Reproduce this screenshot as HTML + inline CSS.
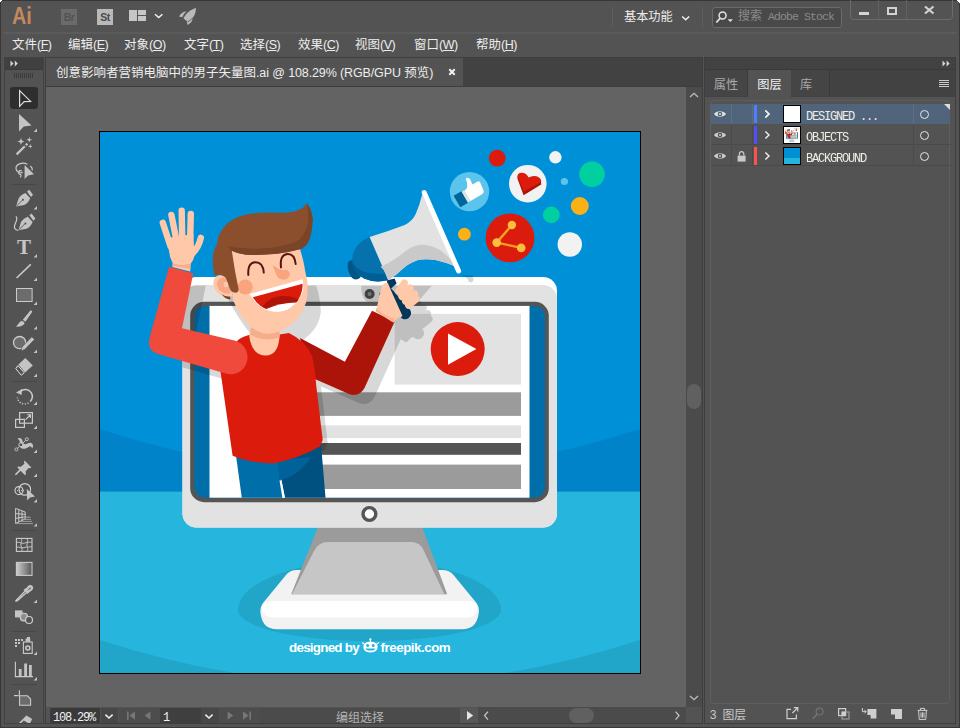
<!DOCTYPE html>
<html lang="zh-CN">
<head>
<meta charset="utf-8">
<title>Adobe Illustrator</title>
<style>
*{box-sizing:border-box;margin:0;padding:0}
html,body{width:960px;height:728px;overflow:hidden;background:#535353}
body{position:relative;font-family:"Liberation Sans","Noto Sans CJK SC",sans-serif;font-size:12px;color:#e6e6e6}
.a{position:absolute}
svg{position:absolute;overflow:visible}
#win{position:absolute;left:0;top:0;width:960px;height:728px;background:#535353;border:1px solid #383838;border-top-color:#363636}
#appline{position:absolute;left:4px;top:32px;width:952px;height:2px;background:#5b5b5b}
.mi{position:absolute;top:37px;font-size:12.5px;line-height:17px;color:#ededed;white-space:nowrap}
.mi u{text-decoration:underline;text-underline-offset:0.5px;text-decoration-thickness:1px}
.mono{font-family:"Liberation Mono","Noto Sans CJK SC",monospace}
/* toolbar */
#tb{position:absolute;left:4px;top:57px;width:40px;height:667px;background:#535353;border:1px solid #424242}
#tbhead{position:absolute;left:5px;top:58px;width:38px;height:12px;background:#404040;border-bottom:1px solid #3a3a3a}
.sep{position:absolute;left:11px;width:26px;height:1px;background:#474747}
/* doc */
#doc{position:absolute;left:45px;top:57px;width:658px;height:667px;background:#535353;border:1px solid #3e3e3e}
#tabbar{position:absolute;left:46px;top:58px;width:656px;height:28px;background:#424242}
#tab{position:absolute;left:46px;top:58px;width:417px;height:28px;background:#535353}
#tabline{position:absolute;left:46px;top:86px;width:656px;height:1px;background:#3d3d3d}
#tabtxt{position:absolute;left:56px;top:65px;font-size:12.5px;line-height:17px;color:#ededed;white-space:nowrap}
#canvas{position:absolute;left:46px;top:87px;width:640px;height:620px;background:#636363}
#vscroll{position:absolute;left:686px;top:87px;width:16px;height:620px;background:#4b4b4b}
#vthumb{position:absolute;left:687px;top:384px;width:14px;height:25px;border-radius:7px;background:#606060}
#status{position:absolute;left:46px;top:707px;width:656px;height:16px;background:#4b4b4b}
/* right panel */
#rp{position:absolute;left:704px;top:57px;width:252px;height:667px;background:#535353;border:1px solid #3e3e3e}
#rphead{position:absolute;left:705px;top:58px;width:250px;height:12px;background:#424242;border-bottom:1px solid #3a3a3a}
#rptabs{position:absolute;left:705px;top:70px;width:250px;height:27px;background:#424242}
.ptab{position:absolute;top:70px;height:26px;font-size:12.2px;line-height:18px;padding-top:6px;text-align:center;color:#a9a9a9;background:#454545;border-right:1px solid #3a3a3a}
#frame{position:absolute;left:710px;top:100px;width:240px;height:604px;border:1px solid #5f5f5f;border-radius:4px}
.row{position:absolute;left:711px;width:239px;height:20px;border-bottom:1px solid #4a4a4a}
.cellsep{position:absolute;top:0;width:1px;height:20px;background:#4a4a4a}
.lname{position:absolute;left:95px;top:4.5px;font-family:"Liberation Mono","Noto Sans CJK SC",monospace;font-size:12px;line-height:17px;color:#efece4;white-space:nowrap;letter-spacing:-1.2px}
</style>
</head>
<body>
<div id="win"></div>
<div id="appline"></div>
<div class="a" style="left:0;top:0;width:2px;height:1px;background:#fff"></div><div class="a" style="left:0;top:1px;width:1px;height:1px;background:#fff"></div>
<div class="a" style="left:957px;top:0;width:3px;height:1px;background:#fff"></div><div class="a" style="left:958px;top:1px;width:2px;height:1px;background:#fff"></div><div class="a" style="left:959px;top:2px;width:1px;height:1px;background:#fff"></div>
<!-- app bar -->
<div class="a" style="left:11.5px;top:2px;font-size:23px;line-height:28px;font-weight:700;color:#c4895e;letter-spacing:0;transform:scaleX(.86);transform-origin:0 0">Ai</div>
<div class="a" style="left:61px;top:9px;width:16px;height:16px;background:#6b6b6b;color:#535353;font-size:10.5px;line-height:16px;text-align:center;font-weight:700;letter-spacing:-0.5px">Br</div>
<div class="a" style="left:97px;top:9px;width:16px;height:16px;background:#b9b9b9;color:#4a4a4a;font-size:10.5px;line-height:16px;text-align:center;font-weight:700;letter-spacing:-0.5px">St</div>
<svg style="left:128px;top:8px" width="72" height="20" viewBox="128 8 72 20">
 <rect x="129" y="10" width="8" height="11" fill="#c6c6c6"/>
 <rect x="138" y="10" width="8" height="5" fill="#c6c6c6"/>
 <rect x="138" y="16" width="8" height="5" fill="#c6c6c6"/>
 <path d="M155 14.2 L158.7 17.6 L162.4 14.2" fill="none" stroke="#f0f0f0" stroke-width="1.5"/>
 <path d="M196 8 C190 9.5 185.5 14 183.5 18.5 L188 22 C192.5 19.5 196 14.5 196 8Z M186.5 11.5 C183 11.5 180.5 13.5 179 16.5 L182.3 17.3 C183.2 15 184.6 13 186.5 11.5Z M192.6 17.5 C192.8 21 190.8 23.3 187.6 25 L186.8 21.8 C189 20.8 191 19.3 192.6 17.5Z" fill="#b9b9b9"/>
</svg>
<div class="a" style="left:612px;top:7px;width:1px;height:20px;background:#5f5f5f"></div>
<div class="a" style="left:702px;top:7px;width:1px;height:20px;background:#5f5f5f"></div>
<div class="a" style="left:624px;top:8.5px;font-size:12.2px;line-height:17px;color:#ededed;white-space:nowrap">基本功能</div>
<svg style="left:680px;top:14px" width="12" height="8" viewBox="680 14 12 8"><path d="M682.2 16.5 L685.7 19.8 L689.2 16.5" fill="none" stroke="#f0f0f0" stroke-width="1.5"/></svg>
<div class="a" style="left:712px;top:7px;width:130px;height:21px;border:1px solid #6b6b6b;border-radius:3px;background:#494949"></div>
<svg style="left:715px;top:9px" width="20" height="16" viewBox="715 9 20 16">
 <circle cx="722.6" cy="15.6" r="3.5" fill="none" stroke="#e2e2e2" stroke-width="1.5"/>
 <path d="M720 18.3 L716.3 22.5" stroke="#e2e2e2" stroke-width="1.8" fill="none"/>
 <path d="M727.6 19.2 h5.4 l-2.7 2.8z" fill="#e2e2e2"/>
</svg>
<div class="a mono" style="left:738px;top:9px;font-size:11.5px;line-height:16px;color:#8b8b8b;white-space:nowrap;letter-spacing:-0.9px"><span style="letter-spacing:0;font-size:12px">搜索</span> Adobe Stock</div>
<div class="a" style="left:850px;top:-1px;width:103px;height:21px;border:1px solid #6b6b6b;border-radius:0 0 4px 4px"></div>
<div class="a" style="left:878px;top:0px;width:1px;height:19px;background:#616161"></div>
<div class="a" style="left:906px;top:0px;width:1px;height:19px;background:#616161"></div>
<div class="a" style="left:859px;top:12px;width:10px;height:3px;background:#d2d2d2"></div>
<div class="a" style="left:887px;top:7px;width:10px;height:8px;border:2px solid #d2d2d2"></div>
<svg style="left:923px;top:5px" width="12" height="10" viewBox="923 5 12 10"><path d="M925 6.5 L933.5 13.5 M933.5 6.5 L925 13.5" stroke="#d2d2d2" stroke-width="2.2" fill="none"/></svg>
<!-- menu -->
<div class="mi" style="left:12px">文件<span style="letter-spacing:-0.5px">(<u>F</u>)</span></div>
<div class="mi" style="left:68px">编辑<span style="letter-spacing:-0.5px">(<u>E</u>)</span></div>
<div class="mi" style="left:124px">对象<span style="letter-spacing:-0.5px">(<u>O</u>)</span></div>
<div class="mi" style="left:184px">文字<span style="letter-spacing:-0.5px">(<u>T</u>)</span></div>
<div class="mi" style="left:240px">选择<span style="letter-spacing:-0.5px">(<u>S</u>)</span></div>
<div class="mi" style="left:298px">效果<span style="letter-spacing:-0.5px">(<u>C</u>)</span></div>
<div class="mi" style="left:355px">视图<span style="letter-spacing:-0.5px">(<u>V</u>)</span></div>
<div class="mi" style="left:414px">窗口<span style="letter-spacing:-0.5px">(<u>W</u>)</span></div>
<div class="mi" style="left:476px">帮助<span style="letter-spacing:-0.5px">(<u>H</u>)</span></div>
<!-- toolbar -->
<div id="tb"></div><div id="tbhead"></div>
<svg style="left:0;top:57px" width="46" height="666" viewBox="0 57 46 666">
<defs><linearGradient id="gr" x1="0" x2="1" y1="0" y2="0"><stop offset="0" stop-color="#cfcfcf"/><stop offset="1" stop-color="#565656"/></linearGradient>
<clipPath id="tbclip"><rect x="5" y="58" width="38" height="665"/></clipPath></defs>
<g clip-path="url(#tbclip)">
<path d="M10.5 60.5 L13.5 63.5 L10.5 66.5Z M14.8 60.5 L17.8 63.5 L14.8 66.5Z" fill="#d6d6d6"/>
<path d="M14.5 73v5M16.5 73v5M18.5 73v5M20.5 73v5M22.5 73v5M24.5 73v5M26.5 73v5M28.5 73v5M30.5 73v5M32.5 73v5" stroke="#3b3b3b" stroke-width="1"/>
<rect x="10" y="87" width="28" height="22" rx="3" fill="#2e2e2e"/>
<path d="M19.6 90.6 L19.6 106.3 L24.2 101.6 L30.6 101.4Z" fill="none" stroke="#dedede" stroke-width="1.2" stroke-linejoin="miter"/>
<g fill="#c4c4c4">
<path d="M19 114 L19 131.6 L23.8 126.6 L31.6 125.4Z"/>
<path id="tri" d="M37 128.6 V132 H33.6Z"/>
<!-- wand -->
<path d="M15.8 153.6 L24 145.4 L25.6 147 L17.4 155.2Z M25 144.4 L26.6 142.8 L28.2 144.4 L26.6 146Z"/>
<path d="M21 138 L21.9 140.6 L24.5 141.5 L21.9 142.4 L21 145 L20.1 142.4 L17.5 141.5 L20.1 140.6Z M29.3 136.8 L30 139 L32.2 139.7 L30 140.4 L29.3 142.6 L28.6 140.4 L26.4 139.7 L28.6 139Z M30.3 144 L30.9 145.7 L32.6 146.3 L30.9 146.9 L30.3 148.6 L29.7 146.9 L28 146.3 L29.7 145.7Z"/>
<!-- lasso -->
<path d="M24.6 165 L24.6 179 L28 175.4 L34 174.2Z"/>
<!-- pen -->
<path id="nib" d="M16 206.6 L18.6 198.4 C20 196 22.4 194 25.4 193 L30.2 198.2 C29 201.4 26.6 203.8 24.2 205Z M27 191.6 L29.2 189.8 L33 194.8 L31 197Z"/>
<use href="#tri" y="77.4"/>
<use href="#nib" x="2.4" y="23.7"/>
<use href="#tri" y="125.4"/>
<use href="#tri" y="149"/>
<use href="#tri" y="173"/>
<!-- brush -->
<path d="M30.4 310.6 C31.8 310 32.6 311.2 31.8 312.4 L25.4 321.8 L22.8 319.8Z M22.2 320.8 L24.6 322.8 C24 325.6 20.5 327.2 15.6 326.6 C18.4 325.2 18.8 321.6 22.2 320.8Z"/>
<use href="#tri" y="197.4"/>
<use href="#tri" y="221"/>
<!-- eraser -->
<path d="M25.3 358 L32.8 365.4 L25 372.4 L18.4 364.6Z"/>
<use href="#tri" y="245"/>
<!-- rotate -->
<path d="M16 392.4 L22 389 L21.6 395Z"/>
<use href="#tri" y="273"/>
<use href="#tri" y="297"/>
<!-- warp -->
<path d="M17.5 438.5 C20 437 22.5 438.5 22.6 441.5 C23 444 25 445 27.5 443.6 C30 442 32.6 442.6 33 445.6 C33.2 447 32.6 448 32 448.4 C31.6 446.6 30.4 446 28.6 447 C26 449 22.4 449.6 20.4 447.4 C18.4 445 20.6 442.4 19.6 440.8 C19.2 440 18.4 439.6 17.5 438.5Z"/>
<use href="#tri" y="321"/>
<!-- pin -->
<path d="M24.6 460.6 L31.4 467.4 L29.8 468.2 L28.6 468 L25.6 471.6 L26 474.4 L24.8 475 L17.4 467.6 L18 466.4 L20.8 466.8 L24.4 463.8 L24 462.4Z"/>
<use href="#tri" y="345"/>
<!-- shape builder arrow -->
<path d="M26.8 489 L27.2 500.4 L30 497.6 L35 496.6Z"/>
<use href="#tri" y="370.4"/>
<!-- perspective -->
<path d="M26.5 516.5 L30 516.5 L31 518 L25.5 518Z" fill="#8a8a8a"/>
<use href="#tri" y="394.6"/>
<use href="#tri" y="471"/>
<!-- blend -->
<rect x="15" y="610.4" width="7.6" height="7"/>
<!-- sprayer dots -->
<path d="M15 639h2v2h-2z M18 639h2v2h-2z M21 639h2v2h-2z M15 642h2v2h-2z M18 642h2v2h-2z M15 645h2v2h-2z M25.6 638.4h4.6v3.4h-4.6z M27 637h3v1.6h-3z"/>
<use href="#tri" y="523"/>
<!-- graph bars -->
<path d="M18.8 669 h2.8 v7.4 h-2.8z M24.2 663.4 h2.8 v13 h-2.8z M29 665 h2.8 v11.4 h-2.8z"/>
<use href="#tri" y="548.4"/>
<!-- slice -->
<path d="M26.4 715.4 L32.2 719 L29.6 724 L23.8 720.4 L19.6 724.6 L18.4 723.6Z"/>
</g>
<g fill="none" stroke="#cbcbcb" stroke-width="1.2">
<!-- lasso loop -->
<path d="M27.4 164.2 C22 161.6 15.6 164.6 16 168.6 C16.3 172 20 173.6 22.6 172.4 M30.4 166 C32 167.4 32.6 169 32.2 170.4 M21.8 171 A2 2 0 1 0 20.6 174.6 C21.4 175.6 21 176.6 20 177.2"/>
<!-- pen slits -->
<path d="M16.6 206 L22.4 200.2" stroke="#535353" stroke-width="0.9"/>
<path d="M19 229.7 L24.8 223.9" stroke="#535353" stroke-width="0.9"/>
<!-- curvature squiggle -->
<path d="M15.8 216.6 C19 219 14.6 223 14.4 226.6 C14.4 229.4 16.6 230.4 18.4 230.2"/>
<!-- line -->
<path d="M16.6 278 L30.8 264.4" stroke-width="1.5"/>
<!-- rect -->
<rect x="16.5" y="288.5" width="15.6" height="13" fill="#6c6c6c" stroke-width="1"/>
<!-- shaper -->
<circle cx="19.6" cy="342.6" r="6.1" fill="#6c6c6c" stroke-width="1.3"/>
<!-- eraser outline -->
<path d="M18 365.6 L24.2 372.8 L21.2 375.2 L15.8 368.6Z" stroke="#e0e0e0" stroke-width="1"/>
<!-- rotate -->
<path d="M20.4 391.4 C23.6 388.6 28.6 389 31 392.4 C33 395.4 32.4 399 30.2 401.4" stroke-width="1.5"/>
<path d="M28.6 402.8 C25.6 404.8 21.4 404.2 19 401.4 C18 400.2 17.4 398.8 17.4 397.4" stroke-width="1.4" stroke-dasharray="1.2 1.6"/>
<!-- scale -->
<rect x="19.6" y="412.6" width="12.8" height="10.6"/>
<rect x="15.6" y="419.4" width="8.8" height="8" />
<path d="M25.6 419.6 L30.2 415 M27.2 414.8 H30.4 V418" stroke-width="1.1"/>
<!-- warp handles -->
<path d="M16.6 449.2 L26.6 439.4" stroke-width="0.9"/>
<circle cx="16.4" cy="449.4" r="1.5" fill="#535353" stroke-width="0.9"/>
<circle cx="26.8" cy="439.2" r="1.5" fill="#535353" stroke-width="0.9"/>
<circle cx="20.8" cy="444.8" r="2" fill="#535353" stroke-width="1"/>
<!-- pin needle -->
<path d="M15.4 474.8 L20.6 469.6" stroke-width="1.6"/>
<!-- shape builder -->
<circle cx="24.8" cy="489.4" r="5.8"/>
<circle cx="19" cy="490.6" r="4"/>
<path d="M17 490.6 H25" stroke-dasharray="1 1" stroke-width="1"/>
<!-- perspective grid -->
<path d="M15.6 508.4 L25.2 512 V519 L15.6 523.4Z M18.8 509.6 V522 M22 510.8 V520.4 M15.6 513.6 L25.2 514.4 M15.6 518.4 L25.2 516.8" stroke-width="1"/>
<path d="M15.6 523.6 H33 M20 521.4 H32 M24 519.4 H31" stroke-width="0.9" stroke="#a5a5a5"/>
<!-- mesh -->
<rect x="16.4" y="538.4" width="15.6" height="13" stroke-width="1.1"/>
<path d="M16.4 542.6 C20 541 22 544.6 25 543 C28 541.4 30 542.6 32 542 M16.4 547.4 C19 546 21 549 24 547.6 C27 546.4 29.4 547.6 32 546.6 M21 538.4 C23 541 19.4 544.6 21.6 547 C22.6 548.6 22 550 21.6 551.4 M27 538.4 C29 541.4 25.6 544.6 27.4 547.4 C28.2 549 27.6 550.4 27.4 551.4" stroke-width="0.9"/>
<!-- gradient -->
<rect x="16.4" y="562.4" width="15.6" height="13" fill="url(#gr)" stroke-width="1.1"/>
<!-- eyedropper -->
<path d="M25.2 591 L18 598.4 C17 599.6 16 599.8 15.8 601 C17 601.2 17.6 600.4 18.8 599.4 L26.6 592.4" stroke-width="1.3"/>
<path d="M24.4 589.2 L28.4 593.2 M25.6 590.4 L28 588 C29 586 31.2 585.6 31.8 587 C32.6 588.4 31 590 29.6 590.6 L27.2 592.4" stroke-width="2.4" stroke="#c4c4c4"/>
<use href="#tri" y="471" stroke="none"/>
<!-- blend -->
<rect x="20.4" y="613.4" width="7" height="7.4" rx="3" fill="#8c8c8c" stroke="#c4c4c4" stroke-width="1.4"/>
<circle cx="29" cy="620" r="3.5" fill="#535353"/>
<!-- sprayer -->
<rect x="23.4" y="642" width="8.8" height="11.4" stroke-width="1.1"/>
<circle cx="27.8" cy="648" r="2" stroke-width="1.5"/>
<!-- graph axes -->
<path d="M15.4 661.8 V676.6 H33" stroke-width="1.1"/>
<!-- artboard -->
<path d="M19.4 690.2 V695.4 M14 695.6 H18.6" stroke-width="1.1"/>
<path d="M19.6 695.8 H27.4 L30.6 699 V705.2 H19.6Z" fill="#6c6c6c" stroke-width="1.1"/>
</g>
<!-- shaper pencil -->
<path d="M31.8 336.8 L34.6 339.4 L24.8 349.4 L21 351 L22 347Z" fill="#c4c4c4" stroke="#535353" stroke-width="0.7"/>
<!-- pen holes -->
<circle cx="23" cy="199.8" r="1" fill="#535353"/><circle cx="25.4" cy="223.5" r="1" fill="#535353"/>
</g>
</svg>
<div class="a" style="left:16px;top:234px;width:16px;height:26px;font-family:'Liberation Serif',serif;font-size:21px;line-height:26px;color:#c6c6c6;text-align:center;font-weight:700;transform:scaleX(1.0)">T</div>
<div class="sep" style="top:184px"></div>
<div class="sep" style="top:381px"></div>
<div class="sep" style="top:530px"></div>
<div class="sep" style="top:631px"></div>
<div class="sep" style="top:684px"></div>
<!-- document -->
<div id="doc"></div>
<div id="tabbar"></div><div id="tab"></div><div id="tabline"></div>
<div id="tabtxt">创意影响者营销电脑中的男子矢量图<span style="letter-spacing:-0.12px">.ai @ 108.29% (RGB/GPU </span>预览)</div>
<svg style="left:448px;top:68px" width="8" height="8" viewBox="0 0 8 8"><path d="M1.3 1.3 L6.7 6.7 M6.7 1.3 L1.3 6.7" stroke="#f2f2f2" stroke-width="2" fill="none"/></svg>
<div id="canvas"></div>
<div id="vscroll"></div><div id="vthumb"></div>
<svg style="left:689px;top:92px" width="10" height="6" viewBox="0 0 10 6"><path d="M1 5 L5 1.3 L9 5" fill="none" stroke="#bdbdbd" stroke-width="1.3"/></svg>
<svg style="left:689px;top:695px" width="10" height="6" viewBox="0 0 10 6"><path d="M1 1 L5 4.7 L9 1" fill="none" stroke="#bdbdbd" stroke-width="1.3"/></svg>
<!-- artboard -->
<div class="a" style="left:99px;top:131px;width:542px;height:543px;background:#000"></div>
<svg style="left:100px;top:132px" width="540" height="541" viewBox="100 132 540 541">
<defs>
 <clipPath id="ab"><rect x="100" y="132" width="540" height="541"/></clipPath>
 <clipPath id="mon"><rect x="182.5" y="285.6" width="374.5" height="241.9" rx="14"/></clipPath>
 <filter id="blk" x="-20%" y="-20%" width="140%" height="140%"><feColorMatrix type="matrix" values="0 0 0 0 0  0 0 0 0 0  0 0 0 0 0  0 0 0 1 0"/></filter>
</defs>
<g clip-path="url(#ab)">
<!-- background -->
<rect x="99" y="131" width="542" height="543" fill="#0090d7"/>
<path d="M99 429 Q369.5 517.4 640 429 V493 H99Z" fill="#0083c8"/>
<rect x="99" y="491.6" width="542" height="183" fill="#25b5dd"/>
<path d="M100 640 Q370 728.4 640 640 V700 H100Z" fill="#21a5c9"/>
<path d="M238 610 A131.5 50 0 0 1 501 610 A131.5 31 0 0 1 238 610Z" fill="#21a5c9"/>
<g id="objs">
<!-- base -->
<path d="M297 570 H442 Q449.5 570 453.5 575 L476.5 603 Q480 608 478.4 615 Q476 629.2 462 629.2 H277 Q263 629.2 260.8 615 Q259.4 608 263 603 L286 575 Q290 570 297 570Z" fill="#f2f2f2"/>
<path d="M262 608 Q263.5 601 272 601 H467.5 Q476 601 477.4 608 Q478 617.6 464 617.6 H275 Q261.4 617.6 262 608Z" fill="#fff"/>
<!-- stand -->
<path d="M318.3 526 H421.8 L447.2 594.2 H291.2Z" fill="#9b9b9b"/>
<path d="M292 594.2 L314 551 Q318.5 542 328 542 H411 Q420 542 423.5 550 L444.4 594.2Z" fill="#c6c6c6"/>
<!-- monitor -->
<rect x="182.5" y="277" width="374.5" height="250.5" rx="14" fill="#fff"/>
<rect x="182.5" y="285" width="374.5" height="242.5" rx="14" fill="#e2e2e2"/>
<rect x="190.2" y="301.8" width="358.6" height="200.4" rx="14" fill="#555"/>
<rect x="194.3" y="305.9" width="350.7" height="191.8" rx="10.5" fill="#006ea9"/>
<rect x="209.5" y="305.9" width="320" height="191.8" fill="#fff"/>
<circle cx="369.6" cy="294" r="5" fill="#4d4d4d"/><circle cx="369.6" cy="294" r="2" fill="#8c8c8c"/>
<circle cx="380.6" cy="294" r="1.8" fill="#9b9b9b"/>
<circle cx="369.4" cy="514" r="6.4" fill="#fff" stroke="#555" stroke-width="3.4"/>
<!-- page content -->
<rect x="394.7" y="313.9" width="126.3" height="70.7" fill="#e2e2e2"/>
<circle cx="457.7" cy="349.1" r="27" fill="#db1c0c"/>
<path d="M448 333.4 V364.8 L476.4 349.1Z" fill="#fff"/>
<rect x="300" y="392.3" width="221" height="23.6" fill="#9b9b9b"/>
<rect x="300" y="425.4" width="221" height="12.6" fill="#e2e2e2"/>
<rect x="300" y="443" width="221" height="11.8" fill="#555"/>
<rect x="300" y="464.6" width="221" height="24.4" fill="#9b9b9b"/>
<!-- shadows -->
<g clip-path="url(#mon)" opacity="0.155">
<path d="M228 299 Q238.5 320 254 338 L300 342 Q319 330 320.8 312 Q320.4 297 315.6 284 L226 284Z" fill="#000"/>
<path d="M361.4 285.6 H432 L417.8 301.8 H367 Q360 296 361.4 285.6Z" fill="#000"/>
<g filter="url(#blk)" transform="translate(5 3)"><use href="#shirt"/></g>
<g filter="url(#blk)"><use href="#armL" transform="translate(13 10)"/><use href="#armR" transform="translate(10 9)"/><g transform="translate(13 20)"><use href="#handR"/><use href="#handle"/></g></g>
</g>
<path d="M461 275.4 H472.6 Q474.8 281 471.4 282.6 Q468.4 282.8 468 279.6 Q466 277 461 275.4Z" fill="#000" opacity="0.155"/>

<!-- legs -->
<path d="M235.5 452 L279.4 460 L282.6 497.7 H241.8Z" fill="#006ea9"/>
<path d="M277.5 458 L321 444 L325.5 497.7 H284.8Z" fill="#00517f"/>
<path d="M277.8 460 L279.6 480 Q297 477.5 311 457Z" fill="#00629a"/>
<path d="M279.5 480.4 L281.4 480.4 L285 497.7 H282.4Z" fill="#fff"/>
<!-- right arm -->
<g id="armR">
<path d="M300 338 L344.9 361.8 L372 310.8 L394.7 321.6 L364.5 388 Q359 397.5 349 394 L308 376Z" fill="#ad1409"/>
</g>
<!-- shirt -->
<path id="shirt" d="M251 334.5 H279.6 L288.8 333 Q306 341 312.3 356.6 Q315.5 370 316.2 385.3 L322.7 440 L320 446.6 Q299 458.5 273 463.6 Q249.5 463 232.6 455.8 L220 368 L238 340 Q243 336 251 334.5Z" fill="#db1c0c"/>
<!-- neck -->
<path d="M251.5 322 H279.5 V337 Q278 355.5 265.8 355.5 Q252 355.5 249.2 336Z" fill="#ffc8a8"/>
<path d="M250.8 327 Q265 338 279.5 331 V337 Q265 343 250 334.6Z" fill="#f5ad8c"/>
<!-- left arm -->
<g id="armL">
<path d="M169 267 L193.2 273.5 L182 328.3 L234.4 340.6 A17 17 0 0 1 226.6 373.8 L158 354 Q146.5 350.5 149.5 338Z" fill="#f04a3c"/>
</g>
<!-- left hand -->
<g fill="none" stroke="#ffc8a8" stroke-width="6.4" stroke-linecap="round">
<path d="M162.8 222.8 L170.4 246"/><path d="M171.4 214.9 L176 238"/><path d="M181.7 210.7 L182.2 238"/><path d="M190.8 214 L190.2 238"/><path d="M200.8 237.8 Q199 247 192 254" stroke-width="6.4"/>
</g>
<path d="M167.2 238 L193.4 234 L194.4 256 Q193.6 260.5 190.6 264 L190.2 271.5 L172.4 267 L172.8 263.6 Q169.6 258 168.8 250Z" fill="#ffc8a8"/>
<path d="M172.8 263.2 Q181 266.6 190.6 263.6 L190.3 269 L172.4 265.8Z" fill="#f5ad8c"/>
<path d="M169 267 L193.2 273.5 L192.4 277.5 L168 271Z" fill="#f04a3c"/>
<!-- head -->
<g id="head">
<path d="M213.2 284 Q213 276 220 275 Q226 274.6 229 278 L232.4 296 Q229 297.8 225 296.8 Q214.5 294 213.2 284Z" fill="#ffc8a8"/>
<path d="M217 284.5 Q217 278 223 277.4 Q228 277.6 229.6 282 L230.6 293 Q226 294.6 222 292 Q217.4 289.6 217 284.5Z" fill="#f7a888"/>
<ellipse cx="226" cy="284.6" rx="2.3" ry="2.8" fill="#ffc8a8"/>
<path d="M221.8 294.2 Q225.6 297 230 296.4 L230.6 299.2 Q225 299.6 221.8 294.2Z" fill="#7a4326"/>
<path d="M232 248 L300 249 Q304 262 305.2 271.3 Q308 281 307.6 290.3 Q307.6 297 306 302.7 Q303.6 310 299 316.4 Q293.6 323 286.8 327.4 Q279 332.6 270.3 333 Q260.6 332.4 252.5 327.4 Q246 322.6 241.5 316.4 Q236 308 233 300 L232 270Z" fill="#ffc8a8"/>
<circle cx="245.2" cy="287" r="7.6" fill="#f9a47e"/>
<path d="M272.6 265.6 Q275.5 266 277.5 268.4 Q281 271 286.5 269.8 Q290.4 271.4 289.6 275.4 Q288 279.6 283.4 279.6 Q278.4 279.4 276.2 274.4 Q274.6 270 272.6 265.6Z" fill="#f9a47e"/>
<path d="M248.3 275 Q247.6 262.4 255.2 262.2 Q263 262 263.8 272.6" fill="none" stroke="#5a1512" stroke-width="2" stroke-linecap="round"/>
<path d="M281 267.4 Q279.6 254.6 287.4 254 Q294.6 253.6 295.7 264" fill="none" stroke="#5a1512" stroke-width="2" stroke-linecap="round"/>
<!-- mouth -->
<path d="M249.5 294 L302.4 279.3 Q304.6 287 302 293.5 Q298 304 290 308.6 Q280 313 270 311 Q258 308.6 249.5 294Z" fill="#fff"/>
<path d="M252.8 297.2 L302.6 283.8 Q303 291 299 298.6 Q294 306 287 309 Q278 311.6 270 310.2 Q259 307.6 252.8 297.2Z" fill="#db1c0c"/>
<path d="M262.4 306.6 Q268 297.4 281 296 Q292 295.6 298.6 299.4 Q295 305.4 289 308.4 Q277 305 266.6 309.2Z" fill="#ad1409"/>
<path d="M265.6 309.2 Q280 302.4 296.8 302.4 Q291 308.8 283 311 Q273 312.6 265.6 309.2Z" fill="#fff"/>
<!-- hair -->
<path d="M307 203.2 Q314.6 214 312.2 226 Q311.4 236 308 242.4 Q304.6 248 298.8 249.6 Q288 252.6 277.2 253.8 Q262 255.4 246.2 254.8 Q238 254 231.8 250.7 L235.2 272 L238.5 288.5 Q238.8 292.8 235.4 292.8 Q231 292.4 229.6 288 Q227.4 281 225.6 277.5 Q221 273.6 214.3 275.4 Q212.2 266 212.8 256.9 Q213.6 249 217.4 243.4 Q217 238.6 219.4 234.2 Q223.6 226 229.7 221.8 Q237 216.6 246.2 214.6 Q256 212.6 266.9 212.5 Q278 213 287.5 212.5 Q295 211.6 299.8 209.4 Q304.4 207 307 203.2Z" fill="#8c4f2d"/>
<path d="M307 203.2 Q314.6 214 312.2 226 Q311.4 236 308 242.4 Q304.6 248 298.8 249.6 Q288 252.6 277.2 253.8 Q262 255.4 246.2 254.8 Q238 254 231.8 250.7 L227.5 246 Q236 248.2 255 248.7 Q270 248.6 280 246 Q291 244 297.5 241 Q303.6 236 305 231 Q308.6 224 308 217.5 Q308.4 210 307 203.2Z" fill="#7a4428"/>
</g>

<!-- megaphone -->
<g id="mega">
<path d="M347.6 264 Q348.6 259.4 353 260.4 L360.5 277.6 Q355.6 281.6 351.6 277.6 Q347 271 347.6 264Z" fill="#005687"/>
<path d="M369.6 237 L388.2 280 Q376 283.6 364 278.4 Q355.4 273.6 352.4 263.4 Q351 254.6 356.4 247 Q361.6 240 369.6 237Z" fill="#0672ad"/>
<path d="M352.2 261 Q356 270 366 272.6 Q376 274.4 385.6 274 L388.2 280 Q376 283.6 364 278.4 Q354 273 352.2 261Z" fill="#005f95"/>
<path d="M369.6 237 Q388 231.4 404.7 225 Q412.6 221 415.7 214 Q419.6 205 422.3 194.2 L456.4 266.7 Q446 262.4 435.5 260 Q426 258.6 418 260 Q409 263 402.5 269 Q396 275.6 388.2 280Z" fill="#e2e2e2"/>
<path d="M380.5 266.7 Q392 262 402.5 253.5 Q411 246 420 244.7 Q431 244.6 440 250 Q447 255 453 262.3 L456.4 266.7 Q446 262.4 435.5 260 Q426 258.6 418 260 Q409 263 402.5 269 Q396 275.6 388.2 280 L384.2 270.6Z" fill="#c9c9c9"/>
<path d="M424.2 192.6 L458.6 271" stroke="#fff" stroke-width="5" stroke-linecap="round" fill="none"/>
<path id="handle" d="M388 290 L391.2 288.6 L410 309.8 A5.4 5.4 0 0 1 400 316.6Z" fill="#00375a"/>
<path d="M386.6 280.6 L394.6 278.4 L396.6 283.6 L389.4 290Z" fill="#00375a"/>
</g>
<!-- right hand -->
<g id="handR">
<path d="M375.8 311.4 L381.6 287.6 Q383 282 388 283.2 L390.6 289.6 L402.4 315.8 Q401 318 398.6 317.2 L393.4 322.4Z" fill="#ffc8a8"/>
<path d="M376.6 308 Q384 316 394.6 318.6 L393.4 322.4 L375.8 311.4Z" fill="#f7b595"/>
<g fill="none" stroke="#ffc8a8" stroke-width="7" stroke-linecap="round">
<path d="M398.6 291.4 L404.4 283"/><path d="M402 296.6 L410.2 288"/><path d="M405.6 301.4 L414.6 293.6"/><path d="M408.6 305.4 L416.2 299"/>
</g>
<path d="M397 289 L403 281.6 L417.6 298 L409.6 307.4Z" fill="#ffc8a8"/>
</g>

<!-- social icons -->
<circle cx="497.2" cy="158.2" r="8.4" fill="#db1c0c"/>
<circle cx="555.4" cy="157.3" r="6.2" fill="#f2f2f2"/>
<circle cx="592" cy="174.3" r="12.8" fill="#00cfa0"/>
<circle cx="564.4" cy="181.5" r="3.6" fill="#5bc4ec"/>
<circle cx="469.5" cy="191.6" r="19.7" fill="#5bc4ec"/>
<circle cx="527.8" cy="183.7" r="18.8" fill="#f2f2f2"/>
<circle cx="579.8" cy="206" r="9" fill="#fbb116"/>
<circle cx="551.3" cy="214.9" r="8.4" fill="#00cfa0"/>
<circle cx="510" cy="237.9" r="24.4" fill="#db1c0c"/>
<circle cx="464.4" cy="234.2" r="6.4" fill="#fbb116"/>
<circle cx="569.8" cy="244.5" r="12.2" fill="#f2f2f2"/>
<path d="M511.9 225 L496.7 242.6 L521.2 247.9" fill="none" stroke="#f9a01b" stroke-width="2.4"/>
<circle cx="511.9" cy="225" r="4.2" fill="#fcbc3c"/><circle cx="496.7" cy="242.6" r="4.3" fill="#fcbc3c"/><circle cx="521.2" cy="247.9" r="4.3" fill="#fcbc3c"/>
<!-- heart -->
<path d="M517.4 178.4 Q517.4 173 522.4 173.2 Q526.6 173.6 528.6 178.6 Q532 176.4 536.6 177.6 Q541.6 179.4 541.2 184.6 L523.6 195.2Z" fill="#ad1409"/>
<path d="M517.4 176.4 Q517.8 172.4 522.4 172.8 Q526.8 173.4 528.6 177.6 Q532 175.2 536.6 176.2 Q541.4 177.6 541.2 182 L524 191.4Z" fill="#db1c0c"/>
<!-- thumb -->
<g transform="translate(-2.8 -1.2) rotate(-30 469 192)">
<rect x="455.6" y="190" width="9" height="13.4" fill="#00659c"/>
<rect x="464.6" y="190.6" width="3" height="12.4" fill="#e2e2e2"/>
<path d="M467.6 191 L471 190 Q474.6 186 474.4 181.4 Q477.6 180.4 478.2 184 L477.6 189.6 H483.6 Q485.8 190 485.2 192.6 L484 201 Q483.4 203 481 203 H467.6Z" fill="#fff"/>
</g>

</g>
<!-- credit -->
<text x="289" y="651.7" font-family="Liberation Sans, sans-serif" font-weight="700" font-size="13.4" fill="#fff" letter-spacing="-0.75">designed by</text>
<g fill="#fff"><path d="M363.4 646 Q363.6 642 370.4 641.8 Q377.4 642 377.6 646 Q378 652.4 370.4 652.6 Q363 652.4 363.4 646Z"/><path d="M369.8 639 H371 V642 H369.8Z"/><circle cx="370.4" cy="639.4" r="1.1"/><path d="M362.4 642 L364.6 643.6 L364 644.6 L361.8 643Z M378.6 642 L376.4 643.6 L377 644.6 L379.2 643Z"/></g>
<circle cx="367.6" cy="645.4" r="1.5" fill="#25b5dd"/><circle cx="373.2" cy="645.4" r="1.5" fill="#25b5dd"/>
<path d="M365.4 648.4 H375.4 Q374.6 650.6 370.4 650.6 Q366.2 650.6 365.4 648.4Z" fill="#25b5dd"/>
<text x="380.6" y="651.7" font-family="Liberation Sans, sans-serif" font-weight="700" font-size="13.4" fill="#fff" letter-spacing="-0.5">freepik.com</text>

</g>
</svg>
<!-- status bar -->
<div id="status"></div>
<div class="a" style="left:46px;top:707px;width:432px;height:16px;background:#535353"></div>
<div class="a" style="left:50px;top:708px;width:50px;height:15px;background:#3a3a3a;border-radius:2px 0 0 2px"></div>
<div class="a mono" style="left:53px;top:710.5px;font-size:12px;line-height:15px;color:#f2f2f2;letter-spacing:-1.2px;white-space:nowrap">108.29%</div>
<div class="a" style="left:101px;top:708px;width:17px;height:15px;background:#474747"></div>
<div class="a" style="left:160px;top:708px;width:41px;height:15px;background:#3f3f3f"></div>
<div class="a mono" style="left:163px;top:710.5px;font-size:12px;line-height:15px;color:#f2f2f2;white-space:nowrap">1</div>
<div class="a" style="left:201px;top:708px;width:18px;height:15px;background:#474747"></div>
<div class="a" style="left:119px;top:708px;width:41px;height:15px;background:#4d4d4d"></div>
<div class="a" style="left:219px;top:708px;width:41px;height:15px;background:#4d4d4d"></div>
<div class="a" style="left:260px;top:708px;width:200px;height:15px;background:#4b4b4b"></div>
<div class="a" style="left:460px;top:708px;width:18px;height:15px;background:#575757"></div>
<div class="a" style="left:686px;top:707px;width:16px;height:16px;background:#535353"></div>
<div class="a" style="left:569px;top:708px;width:25px;height:15px;border-radius:7.5px;background:#606060"></div>
<svg style="left:46px;top:707px" width="656" height="16" viewBox="46 707 656 16">
 <path d="M105.4 714.6 L109 718 L112.6 714.6 M205.4 714.6 L209 718 L212.6 714.6" fill="none" stroke="#f0f0f0" stroke-width="1.5"/>
 <g fill="#777">
  <path d="M127 711.4 h1.6 v8.4 h-1.6z M135 711.4 v8.4 l-5.6 -4.2z M150.4 711.4 v8.4 l-5.6 -4.2z M227.6 711.4 v8.4 l5.6 -4.2z M243 711.4 v8.4 l5.6 -4.2z M249.4 711.4 h1.6 v8.4 h-1.6z"/>
 </g>
 <path d="M467 711 v9 l6.2 -4.5z" fill="#e4e4e4"/>
 <path d="M488 711.6 L484.6 715.6 L488 719.6 M675.6 711.6 L679 715.6 L675.6 719.6" fill="none" stroke="#c4c4c4" stroke-width="1.3"/>
</svg>
<div class="a" style="left:336px;top:710px;font-size:12px;line-height:16px;color:#b4b4b4;white-space:nowrap;font-family:'Liberation Sans','Noto Sans CJK SC',sans-serif">编组选择</div>
<!-- right panel -->
<div id="rp"></div><div id="rphead"></div><div id="rptabs"></div>
<div class="ptab" style="left:705px;width:43px">属性</div>
<div class="ptab" style="left:748px;width:43px;background:#535353;color:#f2f2f2;height:27px;border-right:none">图层</div>
<div class="ptab" style="left:791px;width:39px;text-align:left;padding-left:9px">库</div>
<svg style="left:936px;top:58px" width="16" height="32" viewBox="936 58 16 32">
 <path d="M942.5 60.5 L945.5 63.5 L942.5 66.5Z M946.6 60.5 L949.6 63.5 L946.6 66.5Z" fill="#d6d6d6"/>
 <path d="M939 80.5h10M939 82.5h10M939 84.5h10M939 86.5h10" stroke="#c8c8c8" stroke-width="1"/>
</svg>
<div id="frame"></div>
<!-- rows -->
<div class="row" style="top:104px;background:#50647b;border-bottom-color:#50647b">
 <div class="cellsep" style="left:20px;background:#5b6f86"></div><div class="cellsep" style="left:41px;background:#5b6f86"></div>
 <div class="a" style="left:43px;top:1px;width:3.4px;height:18px;background:#4f7fff"></div>
 <div class="a" style="left:72px;top:1px;width:18px;height:18px;background:#fff;border:1px solid #000"></div>
 <div class="lname">DESIGNED ...</div>
 <div class="cellsep" style="left:202px;background:#5b6f86"></div>
 <div class="a" style="left:209px;top:6px;width:9px;height:9px;border:1.2px solid #e6e6e6;border-radius:50%"></div>
 <div class="a" style="right:0;top:0;width:0;height:0;border-left:6px solid transparent;border-top:6px solid #dcdcdc"></div>
</div>
<div class="row" style="top:125px">
 <div class="cellsep" style="left:20px"></div><div class="cellsep" style="left:41px"></div>
 <div class="a" style="left:43px;top:1px;width:3.4px;height:18px;background:#4f4fff"></div>
 <div class="a" style="left:72px;top:1px;width:18px;height:18px;background:#fff;border:1px solid #000;overflow:hidden">
  <svg style="left:0;top:0;overflow:hidden" width="16" height="16" viewBox="125 140 500 500"><use href="#objs"/></svg>
 </div>
 <div class="lname">OBJECTS</div>
 <div class="cellsep" style="left:202px"></div>
 <div class="a" style="left:209px;top:6px;width:9px;height:9px;border:1.2px solid #e6e6e6;border-radius:50%"></div>
</div>
<div class="row" style="top:146px">
 <div class="cellsep" style="left:20px"></div><div class="cellsep" style="left:41px"></div>
 <div class="a" style="left:43px;top:1px;width:3.4px;height:18px;background:#ff4f4f"></div>
 <div class="a" style="left:72px;top:1px;width:18px;height:18px;background:linear-gradient(#0090d6 0,#0090d6 60%,#25b4dc 60%);border:1px solid #000"></div>
 <div class="lname">BACKGROUND</div>
 <div class="cellsep" style="left:202px"></div>
 <div class="a" style="left:209px;top:6px;width:9px;height:9px;border:1.2px solid #e6e6e6;border-radius:50%"></div>
</div>
<svg style="left:711px;top:104px" width="42" height="63" viewBox="711 104 42 63">
 <g id="eye"><path d="M714 114 C716.4 110.4 723.6 110.4 726 114 C723.6 117.6 716.4 117.6 714 114Z" fill="#e2e2e2"/><circle cx="720" cy="114" r="2.3" fill="#50647b"/><circle cx="720" cy="114" r="1" fill="#e2e2e2"/></g>
 <g transform="translate(0 21)"><path d="M714 114 C716.4 110.4 723.6 110.4 726 114 C723.6 117.6 716.4 117.6 714 114Z" fill="#d0d0d0"/><circle cx="720" cy="114" r="2.3" fill="#535353"/><circle cx="720" cy="114" r="1" fill="#d0d0d0"/></g>
 <g transform="translate(0 42)"><path d="M714 114 C716.4 110.4 723.6 110.4 726 114 C723.6 117.6 716.4 117.6 714 114Z" fill="#d0d0d0"/><circle cx="720" cy="114" r="2.3" fill="#535353"/><circle cx="720" cy="114" r="1" fill="#d0d0d0"/></g>
 <rect x="737.6" y="155.6" width="8" height="6" fill="#c8c8c8"/><path d="M739.4 155.6 V153.8 A2.2 2.2 0 0 1 743.8 153.8 V155.6" fill="none" stroke="#c8c8c8" stroke-width="1.2"/>
 <g fill="none" stroke="#f0f0f0" stroke-width="1.4"><path d="M765.4 110.4 L769 114 L765.4 117.6"/></g>
</svg>
<svg style="left:760px;top:104px" width="14" height="63" viewBox="760 104 14 63"><g fill="none" stroke="#f0f0f0" stroke-width="1.4"><path d="M765.4 110.4 L769 114 L765.4 117.6 M765.4 131.4 L769 135 L765.4 138.6 M765.4 152.4 L769 156 L765.4 159.6"/></g></svg>
<!-- footer -->
<div class="a mono" style="left:709.5px;top:707.5px;font-size:12px;line-height:17px;color:#c9c9c9;white-space:nowrap">3</div><div class="a" style="left:722.5px;top:706.5px;font-size:11.8px;line-height:17px;color:#c9c9c9;white-space:nowrap">图层</div>
<svg style="left:780px;top:704px" width="160" height="20" viewBox="780 704 160 20">
 <g fill="none" stroke="#cfcfcf" stroke-width="1.2">
  <path d="M791 709.4 H787 V718.6 H796.4 V714.6 M792.4 713 L797.4 708 M793.8 707.6 H797.8 V711.6"/>
  <g stroke="#727272"><circle cx="819.6" cy="711.6" r="3.4"/><path d="M817 714.4 L812.6 718.8" stroke-width="1.6"/></g>
  <rect x="838.6" y="708.6" width="7" height="7"/><rect x="842" y="712" width="7" height="7" stroke="#9a9a9a"/>
  <path d="M862.4 708 V711.6 H866 M864.4 709.8 L866.2 711.6 L864.4 713.4" stroke-width="1"/>
  <path d="M917.6 710.4 H927.4 M920.4 710 V708.4 H924.6 V710 M918.6 710.6 L919.2 719.4 H925.8 L926.4 710.6 M921 712.4 V717.6 M922.5 712.4 V717.6 M924 712.4 V717.6" stroke-width="1"/>
 </g>
 <rect x="841.6" y="711.6" width="4.4" height="4.4" fill="#cfcfcf"/>
 <path d="M867.4 709 H876.4 V718.6 H870.6 V715 H867.4Z" fill="#cfcfcf"/>
 <path d="M891 709 H902 V719 H895 V714.6 H891Z" fill="#cfcfcf"/>
</svg>

</body>
</html>
